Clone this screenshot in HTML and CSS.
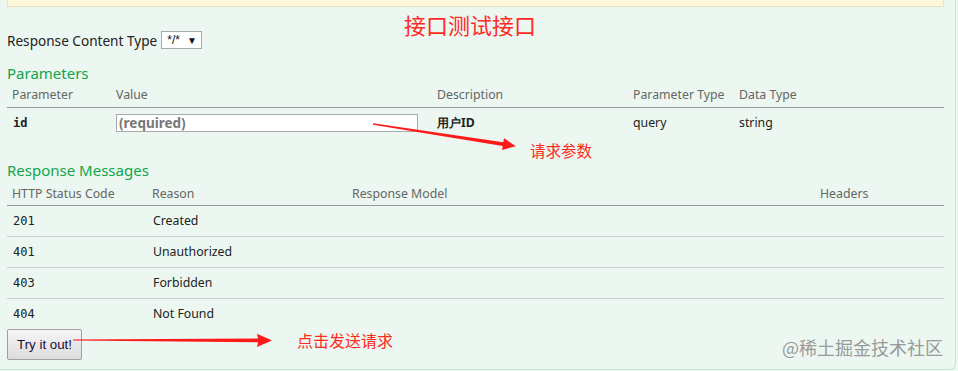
FILE: index.html
```html
<!DOCTYPE html>
<html lang="en">
<head>
  <meta charset="UTF-8">
  <title>Swagger - operation</title>
  <link rel="stylesheet" href="styles.css">
</head>
<body>

  <!-- Operation content -->
  <div class="content">
    <div class="notes"></div>

    <div class="content-type">
      <label>Response Content Type</label>
      <span class="select">*/* <span class="caret">&#9660;</span></span>
    </div>

    <h4>Parameters</h4>
    <table class="params">
      <thead>
        <tr>
          <th class="col-name">Parameter</th>
          <th class="col-value">Value</th>
          <th class="col-desc">Description</th>
          <th class="col-ptype">Parameter Type</th>
          <th>Data Type</th>
        </tr>
      </thead>
      <tbody>
        <tr>
          <td class="code"><b>id</b></td>
          <td><input class="required" type="text" placeholder="(required)"></td>
          <td><b>用户ID</b></td>
          <td>query</td>
          <td>string</td>
        </tr>
      </tbody>
    </table>

    <h4>Response Messages</h4>
    <table class="responses">
      <thead>
        <tr>
          <th class="col-code">HTTP Status Code</th>
          <th class="col-reason">Reason</th>
          <th class="col-model">Response Model</th>
          <th>Headers</th>
        </tr>
      </thead>
      <tbody>
        <tr><td class="code">201</td><td>Created</td><td></td><td></td></tr>
        <tr><td class="code">401</td><td>Unauthorized</td><td></td><td></td></tr>
        <tr><td class="code">403</td><td>Forbidden</td><td></td><td></td></tr>
        <tr><td class="code">404</td><td>Not Found</td><td></td><td></td></tr>
      </tbody>
    </table>

    <button class="submit">Try it out!</button>

    <!-- Annotations drawn over the screenshot -->
    <div class="note note-title">接口测试接口</div>
    <div class="note note-params">请求参数</div>
    <div class="note note-send">点击发送请求</div>
    <svg class="arrows" width="958" height="371" viewBox="0 0 958 371">
      <polygon points="373,123.3 503.3,142.3 504,138.2 515.8,146.2 502,150 502.7,145.9 373,124.7" />
      <polygon points="73,339.5 258,338.6 257,333.8 272,340.4 257,347 258,342.2 73,340.5" />
    </svg>
    <div class="watermark">@稀土掘金技术社区</div>
  </div>

</body>
</html>
```

FILE: styles.css
```css
/* Basic Reset */
* {
  margin: 0;
  padding: 0;
  box-sizing: border-box;
}

body {
  font-family: "Noto Sans", "Open Sans", sans-serif;
  color: #333;
  background-color: #ebf7f0;
  width: 958px;
  height: 371px;
  overflow: hidden;
}

/* Operation content box */
.content {
  position: relative;
  width: 956px;
  height: 370px;
  padding: 0 11px 0 7px;
  background-color: #ebf7f0;
  border-right: 1px solid #c3e8d1;
  border-bottom: 1px solid #c3e8d1;
  border-bottom-right-radius: 6px;
}

.notes {
  height: 7px;
  background-color: #fcf6db;
  border: 1px solid #e8e0c2;
  border-top: none;
}

/* Response content type */
.content-type {
  margin-top: 24px;
  height: 18px;
  display: flex;
  align-items: center;
  gap: 4px;
  font-size: 13.6px;
  color: #222;
}

.select {
  display: inline-flex;
  align-items: center;
  height: 18px;
  padding: 0 4px 0 5px;
  gap: 7px;
  background-color: #fff;
  border: 1px solid #a9a9a9;
  font-family: "Liberation Sans", Arial, sans-serif;
  font-size: 12px;
  color: #111;
}

.select .caret {
  font-size: 10px;
}

/* Section headings */
h4 {
  margin-top: 14px;
  font-size: 15px;
  line-height: 20px;
  font-weight: normal;
  color: #10a54a;
}

.params + h4 {
  margin-top: 21px;
}

/* Tables */
table {
  width: 100%;
  border-collapse: collapse;
  font-size: 12.3px;
}

th {
  text-align: left;
  font-weight: normal;
  color: #666;
  line-height: 18px;
  padding: 3px 0 3px 5px;
  border-bottom: 1px solid #999;
}

td {
  line-height: 18px;
  padding: 6px 0 7px 5px;
  color: #222;
  vertical-align: middle;
}

.col-name { width: 104px; }
.col-value { width: 321px; }
.col-desc { width: 196px; }
.col-ptype { width: 106px; }

.col-code { width: 140px; }
.col-reason { width: 200px; }
.col-model { width: 468px; }

.code {
  font-family: "DejaVu Sans Mono", "Liberation Mono", monospace;
  font-size: 12px;
}

.params .code {
  padding-left: 6px;
}

.params input {
  display: block;
  width: 302px;
  height: 18px;
  padding: 0 2px;
  border: 1px solid #aaa;
  background-color: #fff;
  font-family: "Noto Sans", sans-serif;
  font-size: 13.5px;
}

.params input::placeholder {
  color: #777;
  font-weight: bold;
}

.responses th {
  padding-top: 5px;
  padding-bottom: 2px;
}

.responses td {
  padding: 6px 0 6px 6px;
  border-bottom: 1px solid #ccc;
}

.responses tr:last-child td {
  border-bottom: none;
}

/* Try it out button */
.submit {
  display: block;
  width: 75px;
  height: 31px;
  border: 1px solid #a0a0a0;
  border-radius: 2px;
  background: linear-gradient(to bottom, #f6f6f6, #dcdcdc);
  font-family: "Liberation Sans", Arial, sans-serif;
  font-size: 13.3px;
  color: #1a0a3a;
}

/* Screenshot annotations */
.note {
  position: absolute;
  font-family: "Noto Sans CJK SC", sans-serif;
  color: #ff2a1f;
  line-height: 1;
}

.note-title {
  left: 404px;
  top: 13px;
  font-size: 22px;
}

.note-params {
  left: 530px;
  top: 143px;
  font-size: 15.5px;
}

.note-send {
  left: 297px;
  top: 332px;
  font-size: 16px;
}

.arrows {
  position: absolute;
  left: 0;
  top: 0;
  fill: #ff1a1a;
}

.watermark {
  position: absolute;
  right: 12px;
  top: 338px;
  font-family: "Noto Sans CJK SC", sans-serif;
  font-size: 18px;
  line-height: 1;
  color: #9a9a9a;
}
```
